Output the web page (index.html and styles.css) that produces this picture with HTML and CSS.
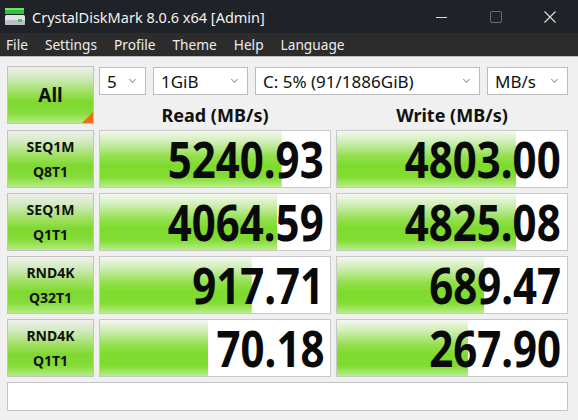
FILE: index.html
```html
<!DOCTYPE html>
<html>
  <head>
    <title>CrystalDiskMark 8.0.6 x64 [Admin]</title>
    <meta name="viewport" content="width=device-width, initial-scale=1">
    <link rel="stylesheet" href="styles.css">
  </head>
  <body>
    <div class="window">
      <div class="titlebar">
        <svg class="app-icon" width="20" height="18" viewBox="0 0 20 18">
          <rect x="0" y="0" width="19" height="6" fill="#2fc23a"/>
          <rect x="0" y="0" width="19" height="2" fill="#6fe06a"/>
          <rect x="0" y="7" width="20" height="10" rx="1.5" fill="#dfe4e6"/>
          <rect x="0" y="12" width="20" height="5" rx="1.5" fill="#b9c0c3"/>
          <rect x="13" y="11" width="4" height="3" fill="#3ccf3c"/>
        </svg>
        <span class="title">CrystalDiskMark 8.0.6 x64 [Admin]</span>
        <div class="controls">
          <svg width="14" height="14" viewBox="0 0 14 14"><path d="M1 7.5h11" stroke="#d8d8d8" stroke-width="1"/></svg>
          <svg width="14" height="14" viewBox="0 0 14 14"><rect x="1.5" y="1.5" width="11" height="11" rx="1.5" fill="none" stroke="#6a6d70" stroke-width="1"/></svg>
          <svg width="14" height="14" viewBox="0 0 14 14"><path d="M1.5 1.5l11 11M12.5 1.5l-11 11" stroke="#e0e0e0" stroke-width="1.1"/></svg>
        </div>
      </div>

      <div class="menubar">
        <span>File</span>
        <span>Settings</span>
        <span>Profile</span>
        <span>Theme</span>
        <span>Help</span>
        <span>Language</span>
      </div>

      <div class="board">
        <div class="all-btn">All</div>
        <div class="top-right">
          <div class="selects">
            <div class="select s-count">5<i class="chev"></i></div>
            <div class="select s-size">1GiB<i class="chev"></i></div>
            <div class="select s-drive">C: 5% (91/1886GiB)<i class="chev"></i></div>
            <div class="select s-unit">MB/s<i class="chev"></i></div>
          </div>
          <div class="heads">
            <div>Read (MB/s)</div>
            <div>Write (MB/s)</div>
          </div>
        </div>

        <div class="label">SEQ1M<br>Q8T1</div>
        <div class="cell" style="--fill:79%"><span>5240.93</span></div>
        <div class="cell" style="--fill:78%"><span>4803.00</span></div>

        <div class="label">SEQ1M<br>Q1T1</div>
        <div class="cell" style="--fill:77%"><span>4064.59</span></div>
        <div class="cell" style="--fill:78%"><span>4825.08</span></div>

        <div class="label">RND4K<br>Q32T1</div>
        <div class="cell" style="--fill:66%"><span>917.71</span></div>
        <div class="cell" style="--fill:64%"><span>689.47</span></div>

        <div class="label">RND4K<br>Q1T1</div>
        <div class="cell" style="--fill:47%"><span>70.18</span></div>
        <div class="cell" style="--fill:57%"><span>267.90</span></div>

        <div class="comment"></div>
      </div>
    </div>
  </body>
</html>
```

FILE: styles.css
```css
body { margin: 0; background: #f0f0f0; font-family: "Noto Sans", "Open Sans", sans-serif; }
.window { width: 578px; height: 420px; overflow: hidden; background: #f0f0f0; }

.titlebar { height: 33px; background: #1f2227; display: flex; align-items: center; color: #f2f2f2; }
.app-icon { margin: 0 7px 0 5px; }
.title { font-size: 14.5px; }
.controls { margin-left: auto; display: flex; align-items: center; gap: 40px; padding-right: 21px; }
.controls svg { display: block; }

.menubar { height: 23px; background: #2c2c2c; border-bottom: 1px solid #bdbdbd; display: flex; align-items: center; color: #ececec; font-size: 13.7px; padding-left: 6px; gap: 17px; }

.board {
    display: grid;
    grid-template-columns: 87px 232px 232px;
    grid-template-rows: 59px repeat(4, 58px) 29px;
    column-gap: 5px;
    row-gap: 5px;
    padding: 9px 0 0 7px;
}

.all-btn, .label {
    border: 1px solid #c2c2c2;
    background: linear-gradient(to bottom, #eef0ec 0%, #d3ebc2 18%, #9fe060 45%, #7fd830 62%, #86dc3a 82%, #b4ec84 100%);
    display: flex;
    align-items: center;
    justify-content: center;
    text-align: center;
    font-weight: bold;
    color: #111;
    box-sizing: border-box;
}
.all-btn { font-size: 19px; position: relative; height: 58px; }
.all-btn::after {
    content: "";
    position: absolute;
    right: 0;
    bottom: 0;
    border-style: solid;
    border-width: 0 0 11px 11px;
    border-color: transparent transparent #f46d0e transparent;
}
.label { font-size: 14px; line-height: 25px; }

.top-right { grid-column: 2 / 4; display: flex; flex-direction: column; }
.selects { display: flex; gap: 7px; margin-top: 1px; }
.select {
    height: 28px;
    box-sizing: border-box;
    background: #fff;
    border: 1px solid #bcbcbc;
    font-size: 17px;
    color: #111;
    display: flex;
    align-items: center;
    padding-left: 7px;
    position: relative;
}
.s-count { width: 47px; }
.s-size { width: 95px; }
.s-drive { width: 225px; }
.s-unit { width: 81px; }
.chev {
    position: absolute;
    right: 10px;
    top: 9px;
    width: 4px;
    height: 4px;
    border-right: 1px solid #999;
    border-bottom: 1px solid #999;
    transform: rotate(45deg);
}

.heads { display: grid; grid-template-columns: 232px 232px; column-gap: 5px; flex: 1; }
.heads div { display: flex; align-items: center; justify-content: center; font-weight: bold; font-size: 18px; color: #111; padding-top: 8px; }

.cell {
    border: 1px solid #c8c8c8;
    box-sizing: border-box;
    background:
        linear-gradient(to bottom, #f4f8f0 0%, #cdeeb2 20%, #93e04e 45%, #7edb2c 62%, #82dc32 82%, #b6ee88 100%) left / var(--fill) 100% no-repeat,
        #fff;
    display: flex;
    align-items: center;
    justify-content: flex-end;
    padding-right: 6px;
    font-weight: bold;
    font-size: 50px;
    color: #0a0a0a;
    line-height: 1;
}
.cell span { display: inline-block; transform: scaleX(0.84); transform-origin: right center; }

.comment { grid-column: 1 / 4; background: #fff; border: 1px solid #c4c4c4; }
```
